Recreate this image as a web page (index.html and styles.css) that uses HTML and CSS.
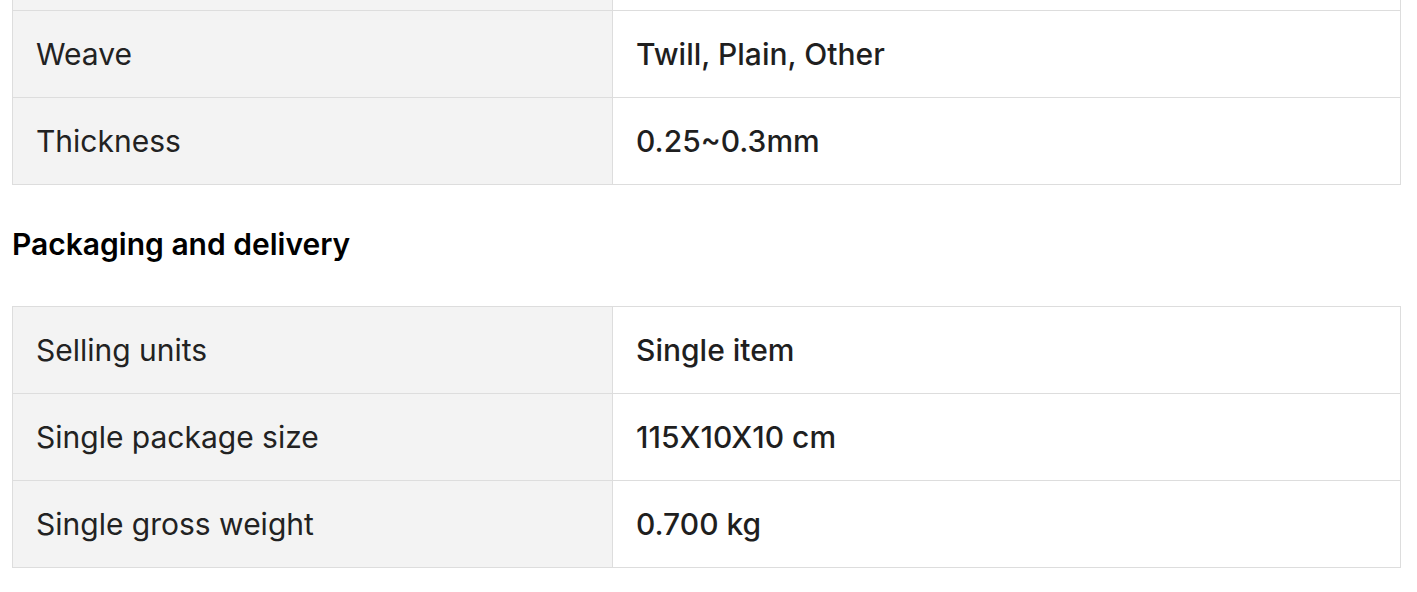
FILE: index.html
```html
<!DOCTYPE html>
<html lang="en">
<head>
<meta charset="utf-8">
<title>Product attributes</title>
<link rel="stylesheet" href="styles.css">
</head>
<body>
<main class="page">
  <section class="section section-first">
    <table class="attr-table">
      <colgroup><col class="col-label"><col class="col-value"></colgroup>
      <tbody>
        <tr><td class="label">Material</td><td class="value">Cotton</td></tr>
        <tr><td class="label">Weave</td><td class="value">Twill, Plain, Other</td></tr>
        <tr><td class="label">Thickness</td><td class="value">0.25~0.3mm</td></tr>
      </tbody>
    </table>
  </section>
  <section class="section">
    <h2 class="section-title">Packaging and delivery</h2>
    <table class="attr-table">
      <colgroup><col class="col-label"><col class="col-value"></colgroup>
      <tbody>
        <tr><td class="label">Selling units</td><td class="value">Single item</td></tr>
        <tr><td class="label">Single package size</td><td class="value">115X10X10 cm</td></tr>
        <tr><td class="label">Single gross weight</td><td class="value">0.700 kg</td></tr>
      </tbody>
    </table>
  </section>
</main>
</body>
</html>
```
FILE: styles.css
```css
html, body {
  margin: 0;
  padding: 0;
  background: #ffffff;
}
body {
  font-family: Inter, "Liberation Sans", sans-serif;
  color: #222222;
  overflow: hidden;
}
.page {
  padding: 0 16px 0 12px;
}
.section-first {
  margin-top: -77px;
}
.attr-table {
  width: 1389px;
  border-collapse: collapse;
  table-layout: fixed;
  border: 1px solid #dddddd;
}
.col-label {
  width: 600px;
}
.attr-table td {
  border: 1px solid #dddddd;
  height: 87px;
  box-sizing: border-box;
  padding: 0 23px;
  font-size: 30px;
  line-height: 40px;
  vertical-align: middle;
}
.label {
  background: #f3f3f3;
  font-weight: 400;
  color: #222222;
}
.value {
  background: #ffffff;
  font-weight: 500;
  color: #1f1f1f;
}
.section-title {
  margin: 39px 0 42px;
  font-size: 30px;
  line-height: 40px;
  font-weight: 600;
  color: #000000;
}
```
